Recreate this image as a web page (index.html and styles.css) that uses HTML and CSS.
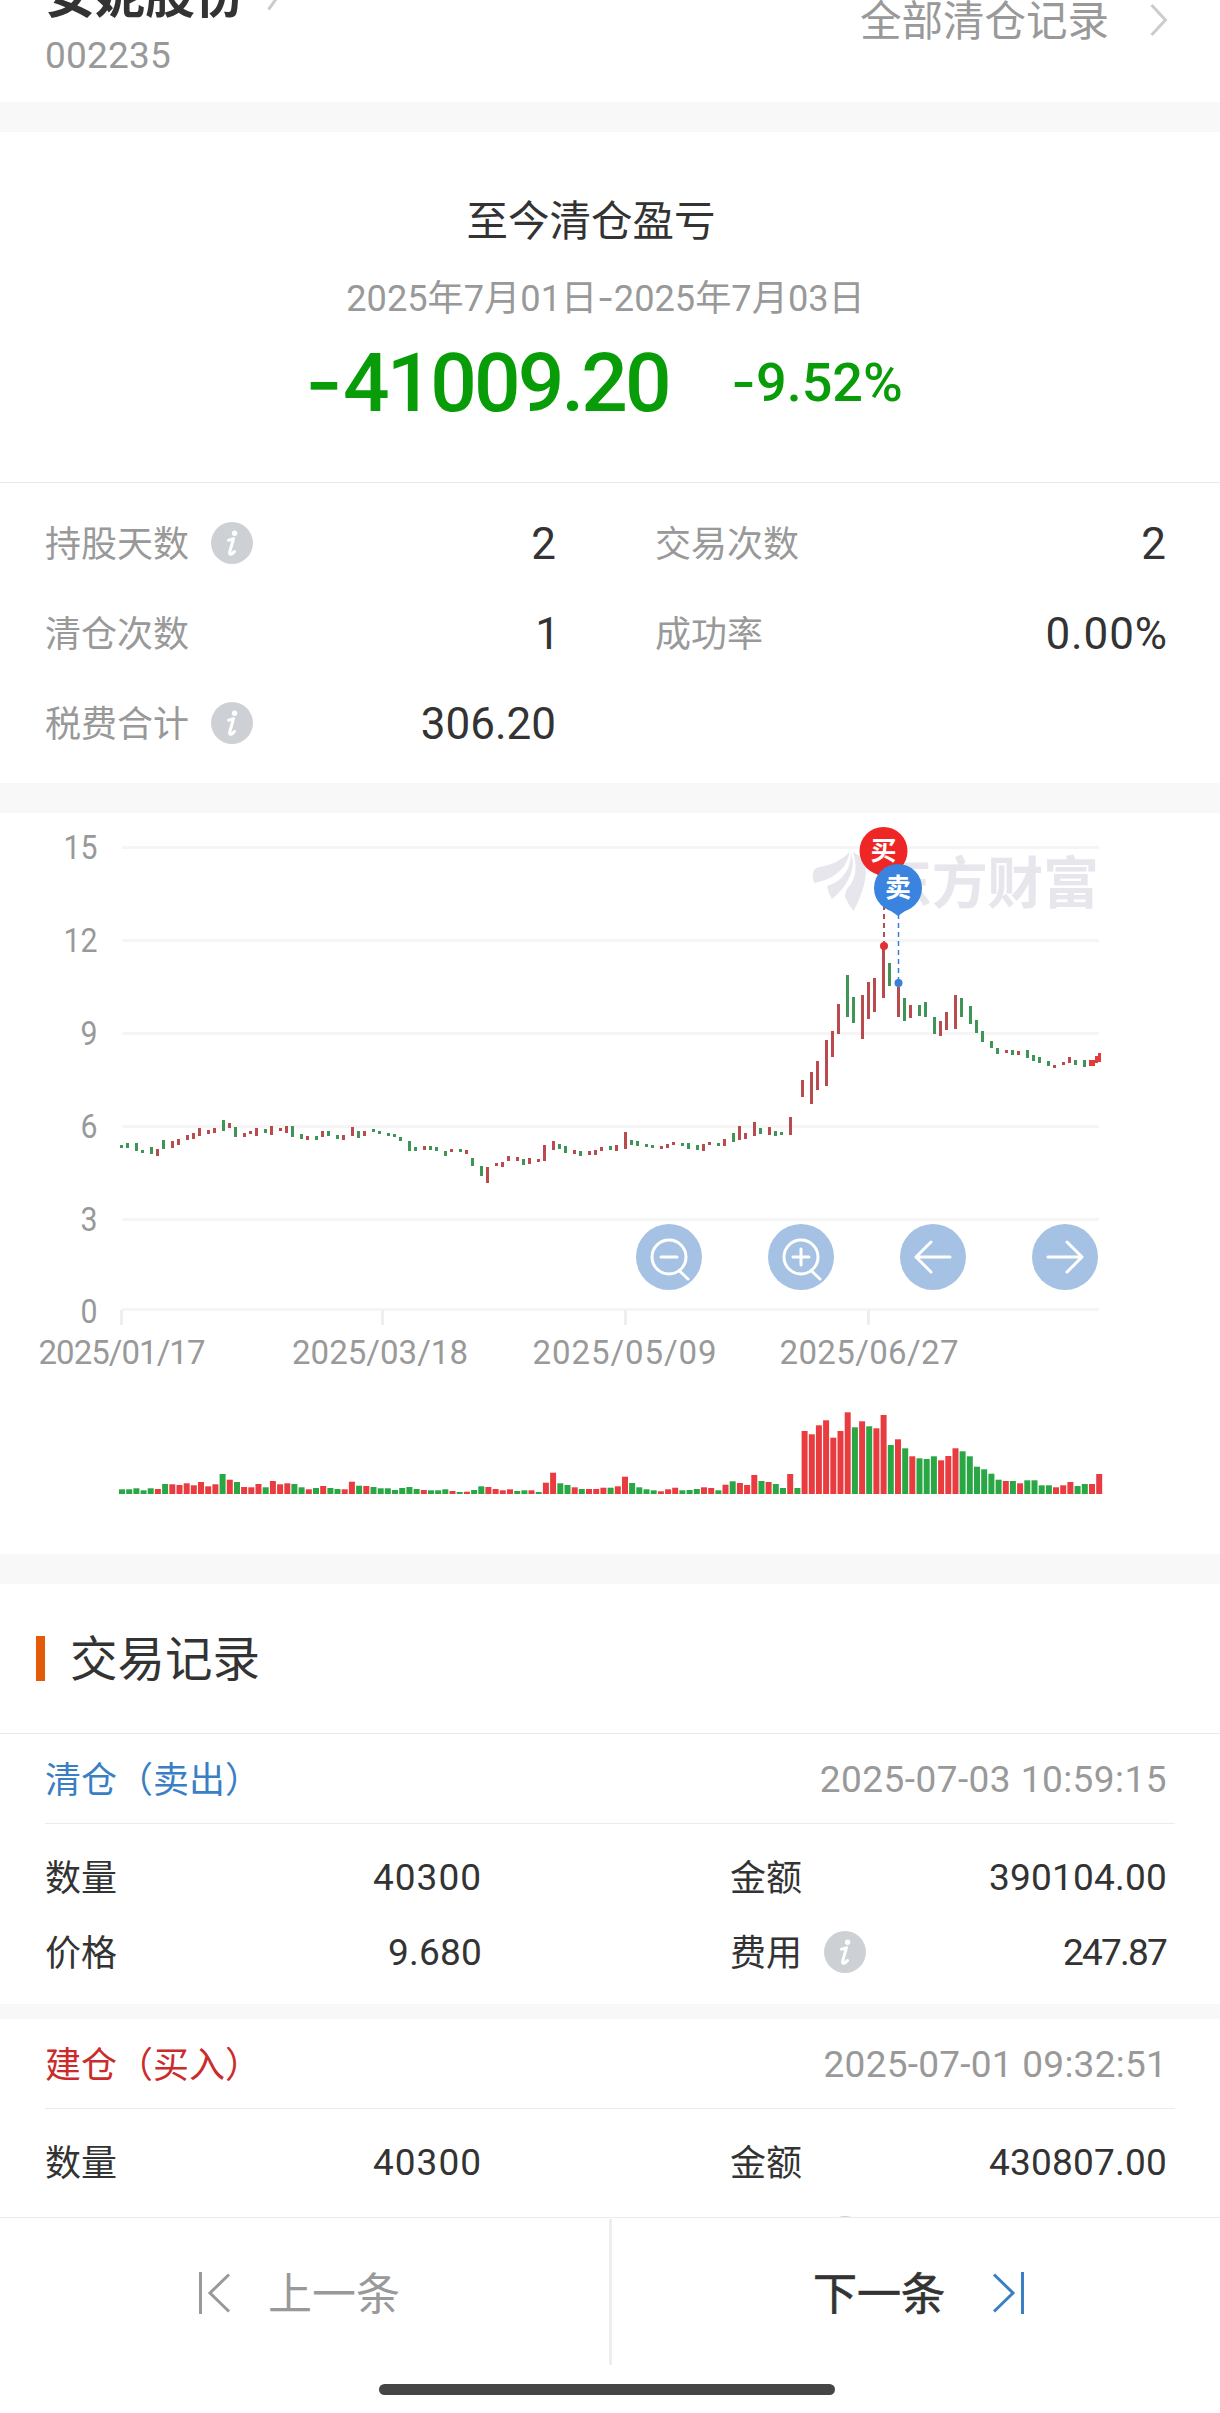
FILE: index.html
```html
<!DOCTYPE html>
<html lang="zh-CN">
<head>
    <meta charset="UTF-8">
    <meta name="viewport" content="width=device-width, initial-scale=1.0">
    <title>清仓记录</title>
    <link rel="stylesheet" href="styles.css">
</head>
<body>
    <svg width="0" height="0" class="defs">
        <symbol id="info" viewBox="0 0 42 42">
            <circle cx="21" cy="21" r="21" fill="#cdd0d5"/>
            <circle cx="23.6" cy="11.3" r="2.7" fill="#fff"/>
            <path d="M17.500 18.200C19 18 21 17.200 22.500 16.500L18.600 30.500C18.200 33.500 21 32.500 23.500 29.500" fill="none" stroke="#fff" stroke-width="3" stroke-linecap="round" stroke-linejoin="round"/>
        </symbol>
    </svg>

    <header class="top">
        <div class="top-row">
            <div class="stock">安妮股份
                <svg class="stock-arrow" width="14" height="32" viewBox="0 0 14 32"><path d="M1.500 1.500L12 16L1.500 30.500"/></svg>
            </div>
            <a class="all">全部清仓记录
                <svg width="18" height="32" viewBox="0 0 18 32"><path d="M1.500 1L15.500 16L1.500 31"/></svg>
            </a>
        </div>
        <div class="code">002235</div>
    </header>

    <section class="summary">
        <h2>至今清仓盈亏</h2>
        <div class="period">2025年7月01日<i>-</i>2025年7月03日</div>
        <div class="profit">
            <span class="amount"><i>-</i>41009.20</span>
            <span class="rate"><i>-</i>9.52%</span>
        </div>
    </section>

    <section class="stats">
        <div class="stat"><span>持股天数</span><svg class="info"><use href="#info"/></svg><b>2</b></div>
        <div class="stat"><span>交易次数</span><b>2</b></div>
        <div class="stat"><span>清仓次数</span><b class="one">1</b></div>
        <div class="stat"><span>成功率</span><b class="percent">0.00%</b></div>
        <div class="stat"><span>税费合计</span><svg class="info"><use href="#info"/></svg><b>306.20</b></div>
    </section>

    <section class="chart">
        <svg id="kline" width="1220" height="741" viewBox="0 813 1220 741"></svg>
        <div class="tools">
            <button><svg viewBox="-33 -33 66 66"><circle r="17"/><path d="M-8 0H8M10.500 14L19 22"/></svg></button>
            <button><svg viewBox="-33 -33 66 66"><circle r="17"/><path d="M-8 0H8M0 -8V8M10.500 14L19 22"/></svg></button>
            <button><svg viewBox="-33 -33 66 66"><path d="M17 0H-17M-2 -15L-17 0L-2 15"/></svg></button>
            <button><svg viewBox="-33 -33 66 66"><path d="M-17 0H17M2 -15L17 0L2 15"/></svg></button>
        </div>
    </section>

    <section class="records">
        <h3><span>交易记录</span></h3>
        <div class="record">
            <div class="record-head"><span class="sell">清仓（卖出）</span><time>2025-07-03 10:59:15</time></div>
            <div class="record-body">
                <div class="cell"><span>数量</span><b class="count">40300</b></div>
                <div class="cell"><span>金额</span><b>390104.00</b></div>
                <div class="cell"><span>价格</span><b>9.680</b></div>
                <div class="cell"><span>费用</span><svg class="info"><use href="#info"/></svg><b class="fee">247.87</b></div>
            </div>
        </div>
        <div class="record">
            <div class="record-head"><span class="buy">建仓（买入）</span><time class="narrow">2025-07-01 09:32:51</time></div>
            <div class="record-body">
                <div class="cell"><span>数量</span><b class="count">40300</b></div>
                <div class="cell"><span>金额</span><b>430807.00</b></div>
                <div class="cell"></div>
                <div class="cell"><span class="ghost"></span><svg class="info"><use href="#info"/></svg></div>
            </div>
        </div>
    </section>

    <footer class="pager">
        <div class="pager-row">
            <a class="prev"><svg width="32" height="42" viewBox="0 0 32 42"><path d="M1.500 0V42M30 2.500L11 21L30 39.500"/></svg><span>上一条</span></a>
            <a class="next"><span>下一条</span><svg width="32" height="42" viewBox="0 0 32 42"><path d="M30.500 0V42M2 2.500L21 21L2 39.500"/></svg></a>
        </div>
        <div class="home-bar"></div>
    </footer>
    <script src="chart.js"></script>
</body>
</html>
```
FILE: styles.css
```css
* {
    box-sizing: border-box;
}
body {
    margin: 0;
    width: 1220px;
    height: 2413px;
    overflow: hidden;
    position: relative;
    background: #fff;
    color: #333;
    font-family: Roboto, "Noto Sans CJK SC", sans-serif;
    font-size: 36px;
}
h2, h3 {
    margin: 0;
    font-weight: 400;
}
b {
    font-weight: 400;
}
.defs {
    position: absolute;
}
.info {
    width: 42px;
    height: 42px;
    margin-left: 22px;
}

/* header */
.top {
    height: 132px;
    overflow: hidden;
    border-bottom: 30px solid #f8f8f8;
    padding: 0 52px 0 45px;
    color: #999;
}
.top-row {
    display: flex;
    justify-content: space-between;
    height: 37px;
}
.stock {
    font-size: 50px;
    line-height: 60px;
    font-weight: 700;
    color: #333;
    margin-top: -34px;
    display: flex;
}
.stock-arrow {
    margin: 13px 0 0 22px;
}
.top svg {
    fill: none;
    stroke: #ccc;
    stroke-width: 3;
}
.all {
    font-size: 41.500px;
    line-height: 60px;
    margin-top: -8px;
    display: flex;
}
.all svg {
    margin: 12px 0 0 41px;
}
.code {
    font-size: 37px;
    line-height: 38px;
    letter-spacing: 0.2px;
}

/* profit summary */
.summary {
    height: 351px;
    padding-top: 60px;
    text-align: center;
    border-bottom: 1px solid #ebebeb;
}
.summary h2 {
    font-size: 41.500px;
    line-height: 60px;
    padding-right: 38px;
}
.summary i {
    font-family: Inter, sans-serif;
    font-style: normal;
    letter-spacing: 0;
}
.period {
    font-size: 36.200px;
    line-height: 52px;
    margin-top: 20px;
    padding-right: 9px;
    color: #999;
}
.profit {
    display: flex;
    align-items: center;
    margin: 6px 0 0 305px;
    height: 100px;
    color: #089d08;
    font-weight: 500;
}
.amount {
    width: 426px;
    text-align: left;
    font-size: 82px;
    letter-spacing: -2.900px;
}
.rate {
    font-size: 54px;
    letter-spacing: 0;
}

/* stats */
.stats {
    display: grid;
    grid-template-columns: 510px 510px;
    column-gap: 100px;
    grid-auto-rows: 90px;
    height: 330px;
    padding: 15px 45px 0;
    border-bottom: 30px solid #f8f8f8;
}
.stat {
    display: flex;
    align-items: center;
    color: #999;
}
.stat span {
    padding-bottom: 4px;
}
.stat b {
    margin: 1px -1px 0 auto;
    font-size: 44px;
    color: #333;
}
.stat .one {
    margin-right: -5px;
}
.stat .percent {
    letter-spacing: 0.900px;
    margin-right: -3px;
}

/* chart */
.chart {
    position: relative;
    height: 771px;
    border-bottom: 30px solid #f8f8f8;
}
#kline {
    display: block;
}
#kline text {
    fill: #999;
    font-size: 33px;
}
#kline .mark {
    fill: #e6e6ec;
    font-size: 56px;
    font-weight: 700;
}
#kline .pin {
    fill: #fff;
    font-size: 26px;
    font-weight: 700;
}
.tools {
    position: absolute;
    left: 636px;
    top: 411px;
    display: flex;
    gap: 66px;
}
.tools button {
    width: 66px;
    height: 66px;
    padding: 0;
    border: none;
    border-radius: 50%;
    background: #a5c1e3;
}
.tools svg {
    display: block;
    fill: none;
    stroke: #fff;
    stroke-width: 3;
    stroke-linecap: round;
    stroke-linejoin: round;
}

/* trade records */
.records {
    height: 633px;
    overflow: hidden;
}
.records h3 {
    display: flex;
    align-items: center;
    height: 150px;
    padding-left: 36px;
    font-size: 47.500px;
    border-bottom: 1px solid #ebebeb;
}
.records h3 span {
    padding-bottom: 7px;
}
.records h3::before {
    content: "";
    width: 9px;
    height: 45px;
    margin-right: 25px;
    background: #e35a0a;
}
.record {
    height: 285px;
    border-bottom: 15px solid #f8f8f8;
}
.record-head {
    display: flex;
    justify-content: space-between;
    align-items: center;
    height: 90px;
    margin: 0 45px;
    padding-right: 8px;
    border-bottom: 1px solid #ebebeb;
}
.record-head span,
.cell span {
    padding-bottom: 4px;
}
.record-head time {
    font-size: 37px;
    letter-spacing: 0.450px;
    padding-top: 1px;
    color: #999;
}
.record-head .narrow {
    letter-spacing: 0.250px;
}
.sell {
    color: #3a7fc4;
}
.buy {
    color: #cc2b2b;
}
.record-body {
    display: grid;
    grid-template-columns: 436px 436px;
    column-gap: 249px;
    grid-auto-rows: 75px;
    padding: 15px 45px 0;
}
.cell {
    display: flex;
    align-items: center;
}
.cell b {
    margin: 1px -1px 0 auto;
    font-size: 37px;
    letter-spacing: 0.200px;
}
.cell .count {
    letter-spacing: 1px;
}
.cell .fee {
    letter-spacing: -1.800px;
    margin-right: 0;
}
.ghost {
    width: 72px;
}

/* bottom pager */
.pager {
    position: absolute;
    left: 0;
    bottom: 0;
    width: 1220px;
    height: 196px;
    background: #fff;
    border-top: 1px solid #ebebeb;
}
.pager-row {
    display: flex;
    height: 146px;
    margin-top: 1px;
}
.pager-row a {
    display: flex;
    align-items: center;
    font-size: 44px;
}
.pager-row span {
    padding-bottom: 3px;
}
.pager-row svg {
    margin-top: 2px;
    fill: none;
    stroke: currentColor;
    stroke-width: 3;
}
.prev {
    width: 612px;
    color: #999;
    padding-left: 199px;
    gap: 37px;
    border-right: 3px solid #eee;
}
.next {
    flex: 1;
    padding-left: 201px;
    gap: 47px;
    -webkit-text-stroke: 0.700px #333;
}
.next svg {
    color: #3a7fc4;
}
.home-bar {
    width: 456px;
    height: 11px;
    margin: 19px 0 0 379px;
    border-radius: 6px;
    background: #454545;
}
```
FILE: chart.js
```js
const RED = "#b94a4e", GREEN = "#3f9556";

// candles: colour, high, low (in thirds of a pixel from y = 890)
const candles = `g765,773 g760,774 g759,782 g780,788 g772,792 r778,800 g751,779 r753,775 r746,765 r736,752
r729,746 r715,738 r720,731 r714,728 g690,722 r700,716 g710,741 r729,741 r722,732 r713,738
g718,729 r708,735 r715,725 r708,729 g708,741 g732,746 r738,749 g739,752 r723,741 g724,738
g735,746 r736,751 r712,739 g723,745 r723,739 g717,726 g723,732 g728,738 g733,741 g740,753
g753,782 g771,783 r768,779 g768,781 g771,783 g784,798 r777,786 g777,786 r780,791 g805,830
g829,859 r830,879 r819,829 r815,830 r798,814 r801,813 g807,824 r804,821 r806,815 r765,812
r753,779 g763,777 g768,788 r780,792 g784,800 r783,796 r780,794 r771,783 g768,781 r764,781
r726,776 g749,764 g753,767 g762,771 g765,775 r769,777 r762,775 r756,766 g759,768 g760,778
g766,782 r761,781 r757,765 g759,768 r746,767 g729,755 r709,750 r730,748 r695,737 g715,733
r712,735 g724,740 g726,734 r680,735 - r570,620 r545,641 r513,600 r450,589 r423,501
r341,430 g256,381 g320,398 r316,447 r276,388 r264,366 r175,326 g220,288 r292,383 g323,393
r345,385 g346,380 g336,381 g381,433 r392,438 r367,420 r316,419 g325,383 g348,401 g390,428
g423,455 g453,474 g473,491 r481,490 g480,496 r483,495 g481,504 g496,515 g501,518 g513,528
r524,533 r516,524 r501,520 g510,524 g510,530`.split(/\s+/);

// volume: colour, bar height in thirds of a pixel
const volumes = `g14 g14 g17 g11 g17 r15 g30 r29 r27 r32 r26 r36 r23 r29 g60 r43 g36 r21 r20 r30
g20 r39 r29 r32 g30 g20 r14 g18 r24 g18 g15 r14 r37 g25 r24 g21 g17 g17 g12 g18
g21 g15 r12 g11 g11 g14 r9 g6 r7 g12 g23 r21 r15 r11 r14 g9 g11 r11 g6 r34
r64 g32 g27 r20 g15 r15 r15 r19 g19 r23 r52 g33 g20 g14 g11 r8 r14 r19 g11 g12
g15 r20 r18 g11 r28 g38 r33 r27 r57 g39 r36 g30 g18 r60 g18 r189 r179 r206 r221 r169
r189 r245 g200 r218 g203 r197 r237 g147 r164 g137 r113 g107 g105 g113 r101 r114 r137 g128 g113 g82
g74 g61 g43 r39 g39 r32 g41 g41 g26 g26 r20 r26 r36 g24 g30 r30 r60`.split(/\s+/);

const rect = (x, y, w, h, c) => `<rect x="${x}" y="${y}" width="${w}" height="${h}" fill="${c}"/>`;
let out = "";

[847, 940, 1033, 1126, 1219, 1309].forEach((y, i) => {
    const label = String(15 - i * 3);
    const w = label.length * 17;
    out += rect(122, y - 1, 977, 3, "#f5f5f5");
    out += `<text x="${97.5 - w}" y="${y + 12 + (i === 5 ? 2 : 0)}" textLength="${w}" lengthAdjust="spacingAndGlyphs">${label}</text>`;
});

[[122, "2025/01/17", 167], [380, "2025/03/18", 176], [624.5, "2025/05/09", 184], [869, "2025/06/27", 179]].forEach(([x, label, w], i) => {
    out += rect([120, 381, 624, 867][i], 1310, 3, 15, "#eee");
    out += `<text x="${x - w / 2}" y="1364" textLength="${w}">${label}</text>`;
});

// watermark
out += `<g fill="#e6e6ec">
<path d="M813 874Q813 868 820 867Q838 864 850 852Q846 868 836 874Q829 880 814.500 883Q812 878 813 874Z"/>
<path d="M851 853Q856 866 848 880Q843 890 832 899Q828 893 827 886Q840 882 846 872Q851 864 851 853Z"/>
<path d="M853 852Q866 858 866 874Q864 892 853.500 911Q848 904 845 897Q845 890 851 884Q859 870 853 852Z"/>
</g><text class="mark" x="876" y="903" textLength="223">东方财富</text>`;

candles.forEach((c, i) => {
    if (c === "-") return;
    const [top, bottom] = c.slice(1).split(",").map(Number);
    const x = 120 + Math.round(i * 2.3945) * 3;
    out += rect(x, Math.round(890 + top / 3), 3, Math.max(3, Math.round((bottom - top) / 3)), c[0] === "r" ? RED : GREEN);
});
out += `<path d="M1089 1060h6v-4h3v-3h3v9h-3v1h-3v3h-6z" fill="#e23b3e"/>`;

volumes.forEach((v, i) => {
    const h = v.slice(1) / 3;
    out += rect((119 + i * 7.185).toFixed(1), (1494 - h).toFixed(1), 6, h.toFixed(1), v[0] === "r" ? "#e83c40" : "#2aa745");
});

// buy and sell pins
const pin = (x, y, c, t) => `<circle cx="${x}" cy="${y}" r="24" fill="${c}"/><path d="M${x - 17} ${y + 16}L${x} ${y + 28}L${x + 17} ${y + 16}Z" fill="${c}"/>
<text class="pin" x="${x}" y="${y + 9}" text-anchor="middle">${t}</text>`;
out += `<path d="M884 896V942" stroke="#b94a4e" stroke-width="2" stroke-dasharray="5 4"/>
<path d="M898.500 914V980" stroke="#3a7fd0" stroke-width="1.500" stroke-dasharray="5 4"/>
<circle cx="884" cy="946" r="4" fill="#e03033"/><circle cx="898.500" cy="983" r="4" fill="#3a7fd8"/>`;
out += pin(883.5, 851, "#ef2626", "买") + pin(898, 888, "#3a84e0", "卖");

document.getElementById("kline").innerHTML = out;
```
